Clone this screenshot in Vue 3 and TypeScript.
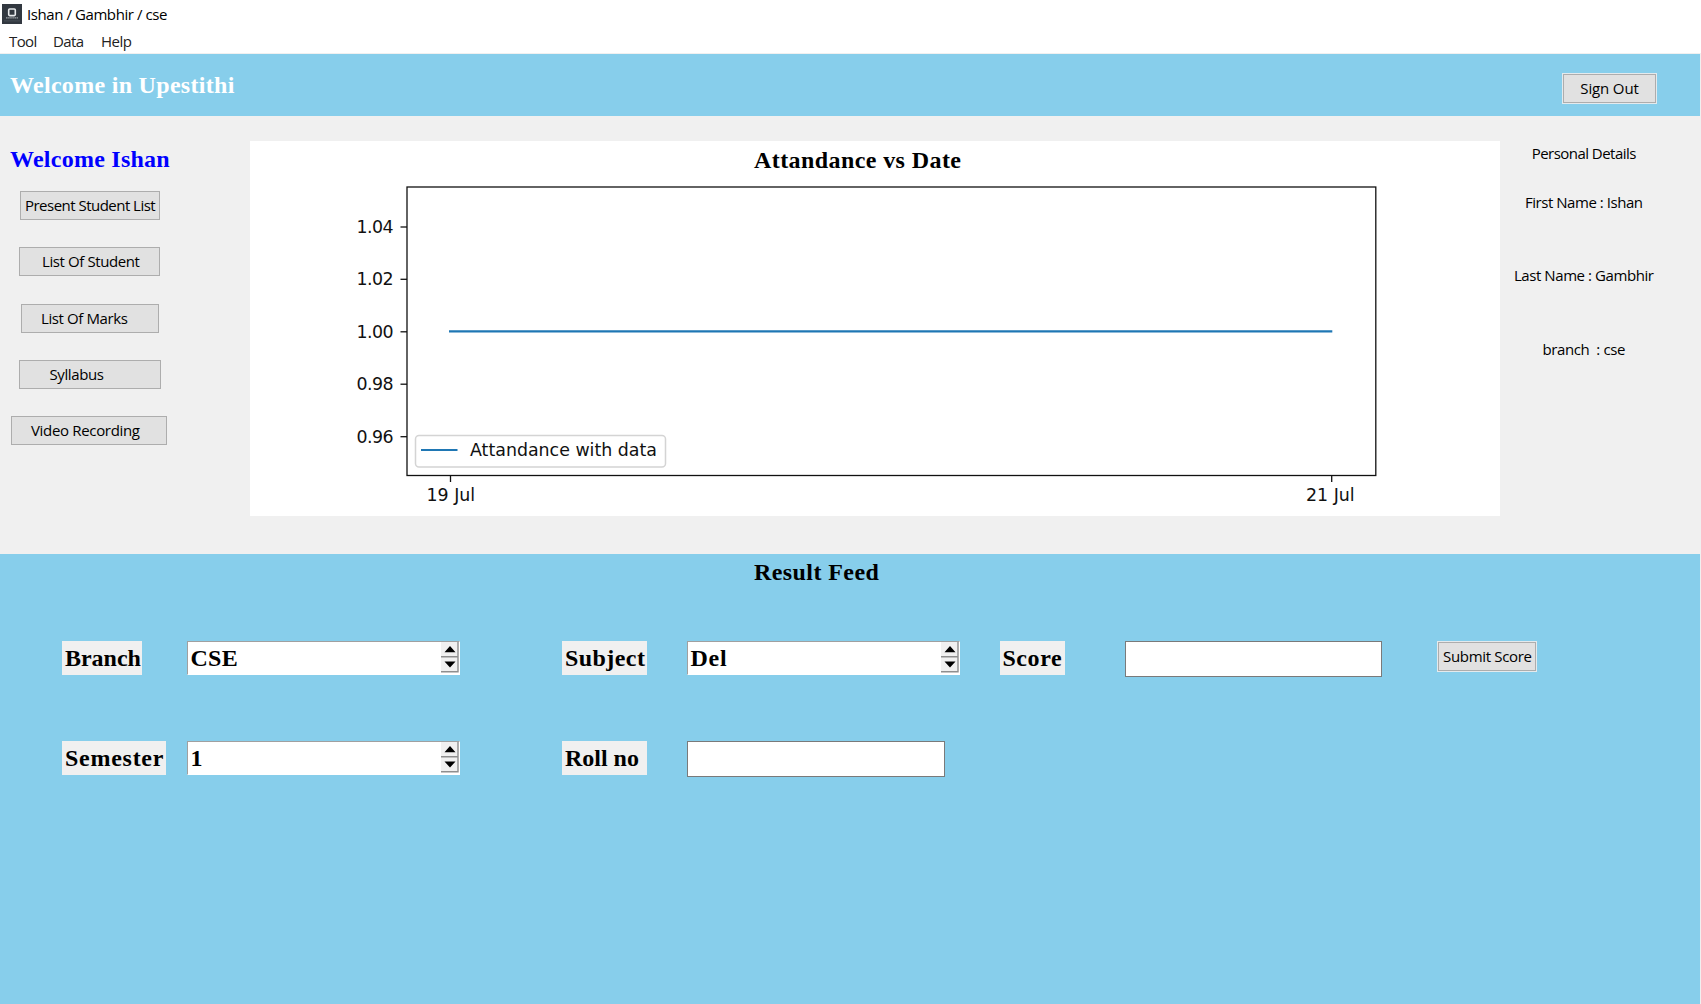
<script setup lang="ts">
interface Caption { text: string; track: number }
interface NavButton extends Caption { left: number; width: number; indent: number }

const menu: Caption[] = [
  { text: 'Tool', track: -0.6 },
  { text: 'Data', track: -0.6 },
  { text: 'Help', track: -0.5 },
]

const nav: NavButton[] = [
  { text: 'Present Student List', track: -0.52, left: 20, width: 140, indent: 4 },
  { text: 'List Of Student', track: -0.4, left: 19, width: 141, indent: 22 },
  { text: 'List Of Marks', track: -0.4, left: 21, width: 138, indent: 19 },
  { text: 'Syllabus', track: -0.4, left: 19, width: 142, indent: 29.5 },
  { text: 'Video Recording', track: -0.33, left: 11, width: 156, indent: 19 },
]

const details: Caption[] = [
  { text: 'Personal Details', track: -0.53 },
  { text: 'First Name : Ishan', track: -0.46 },
  { text: 'Last Name : Gambhir', track: -0.42 },
  { text: 'branch  : cse', track: -0.4 },
]

const yTicks = [
  { label: '1.04', y: 86 },
  { label: '1.02', y: 138.3 },
  { label: '1.00', y: 190.8 },
  { label: '0.98', y: 243.2 },
  { label: '0.96', y: 295.7 },
]
const xTicks = [
  { label: '19 Jul', x: 200.5, left: 176.5 },
  { label: '21 Jul', x: 1081.7, left: 1056 },
]

const spacing = (track: number) => ({ letterSpacing: `${track}px` })
</script>

<template>
  <div class="window">
    <div class="titlebar">
      <svg class="app-icon" width="20" height="20" viewBox="0 0 20 20">
        <rect width="20" height="20" fill="#323840" />
        <rect x="6.7" y="5" width="6.6" height="6.6" rx="1" fill="none" stroke="#e8eaec" stroke-width="1.6" />
        <path d="M4 13.9H16" stroke="#b9bdc1" stroke-width="1" stroke-dasharray="1.6 .5" />
        <path d="M2 16.9H18" stroke="#565c63" stroke-width=".7" />
      </svg>
      <span class="caption" :style="spacing(-0.42)">Ishan / Gambhir / cse</span>
    </div>
    <nav class="menubar">
      <span v-for="m in menu" :key="m.text" class="menu-item" :style="spacing(m.track)">{{ m.text }}</span>
    </nav>

    <header class="banner">
      <h1 :style="spacing(0.3)">Welcome in Upestithi</h1>
      <button class="btn ringed sign-out" :style="spacing(-0.15)">Sign Out</button>
    </header>

    <main class="main">
      <aside class="side">
        <h2 class="hello" :style="spacing(0.25)">Welcome Ishan</h2>
        <div class="nav">
          <button
            v-for="b in nav" :key="b.text" class="btn"
            :style="{ ...spacing(b.track), marginLeft: b.left + 'px', width: b.width + 'px', paddingLeft: b.indent + 'px' }"
          >{{ b.text }}</button>
        </div>
      </aside>

      <section class="chart">
        <svg width="1250" height="375" viewBox="0 0 1250 375">
          <text class="chart-title" x="504" y="26.5" textLength="207">Attandance vs Date</text>
          <rect x="157" y="46" width="968.8" height="288.5" fill="none" stroke="#111" stroke-width="1.3" />
          <g v-for="t in yTicks" :key="t.label">
            <line x1="150.5" x2="157" :y1="t.y" :y2="t.y" stroke="#111" stroke-width="1.3" />
            <text class="tick" x="106.5" :y="t.y + 6" textLength="37">{{ t.label }}</text>
          </g>
          <g v-for="t in xTicks" :key="t.label">
            <line :x1="t.x" :x2="t.x" y1="334.5" y2="341" stroke="#111" stroke-width="1.3" />
            <text class="tick" :x="t.left" y="360">{{ t.label }}</text>
          </g>
          <line x1="199" x2="1082.3" y1="190.4" y2="190.4" stroke="#1f77b4" stroke-width="2.2" />
          <rect x="165.5" y="294.5" width="250" height="31.5" rx="3.5" fill="#fff" stroke="#d4d4d4" stroke-width="1.5" />
          <line x1="171" x2="207.5" y1="309" y2="309" stroke="#1f77b4" stroke-width="2.2" />
          <text class="tick" x="220" y="315" textLength="187">Attandance with data</text>
        </svg>
      </section>

      <aside class="details">
        <p v-for="d in details" :key="d.text" :style="spacing(d.track)">{{ d.text }}</p>
      </aside>
    </main>

    <section class="feed">
      <h2 class="feed-title" :style="spacing(0.42)">Result Feed</h2>
      <div class="form">
        <label class="tag branch">Branch</label>
        <div class="spin">
          <span :style="spacing(0.3)">CSE</span>
          <svg width="18" height="31" viewBox="0 0 18 31">
            <rect width="17" height="30" fill="#f0f0f0" />
            <path d="M0 14.8H17M0 29.8H17.5M17 0V30.5" stroke="#8e8e8e" stroke-width="1.4" fill="none" />
            <path d="M3.5 10.3L9 4L14.5 10.3ZM3.5 19.5H14.5L9 25.6Z" fill="#000" />
          </svg>
        </div>
        <label class="tag subject" :style="spacing(0.45)">Subject</label>
        <div class="spin">
          <span :style="spacing(0.8)">Del</span>
          <svg width="18" height="31" viewBox="0 0 18 31">
            <rect width="17" height="30" fill="#f0f0f0" />
            <path d="M0 14.8H17M0 29.8H17.5M17 0V30.5" stroke="#8e8e8e" stroke-width="1.4" fill="none" />
            <path d="M3.5 10.3L9 4L14.5 10.3ZM3.5 19.5H14.5L9 25.6Z" fill="#000" />
          </svg>
        </div>
        <label class="tag score" :style="spacing(0.6)">Score</label>
        <div class="entry"></div>
        <button class="btn ringed submit" :style="spacing(-0.32)">Submit Score</button>

        <label class="tag semester" :style="spacing(0.75)">Semester</label>
        <div class="spin">
          <span>1</span>
          <svg width="18" height="31" viewBox="0 0 18 31">
            <rect width="17" height="30" fill="#f0f0f0" />
            <path d="M0 14.8H17M0 29.8H17.5M17 0V30.5" stroke="#8e8e8e" stroke-width="1.4" fill="none" />
            <path d="M3.5 10.3L9 4L14.5 10.3ZM3.5 19.5H14.5L9 25.6Z" fill="#000" />
          </svg>
        </div>
        <label class="tag subject">Roll no</label>
        <div class="entry"></div>
      </div>
    </section>
  </div>
</template>

<style>
body { margin: 0; overflow: hidden; }
</style>

<style scoped>
.window {
  width: 1701px;
  height: 1004px;
  display: flex;
  flex-direction: column;
  background: #f0f0f0;
  color: #000;
  font: 15px "Open Sans", "Noto Sans", sans-serif;
  overflow: hidden;
}
h1, h2, p { margin: 0; }
h1, h2, .tag, .spin {
  font-family: "Liberation Serif", "Times New Roman", serif;
  font-size: 24px;
  font-weight: bold;
  white-space: pre;
}
.titlebar { height: 28px; display: flex; background: #fff; }
.app-icon { margin: 4px 0 0 2px; flex: none; }
.caption { margin-left: 5px; line-height: 29px; white-space: nowrap; }
.menubar {
  height: 25px;
  display: flex;
  gap: 18px;
  padding-left: 9px;
  background: #fff;
  border-bottom: 1px solid #f0f0f0;
  color: #222;
}
.menu-item { width: 26px; line-height: 26px; white-space: nowrap; }
.menu-item:nth-child(2) { width: 30px; }
.banner {
  height: 62px;
  margin-right: 1px;
  display: flex;
  justify-content: space-between;
  background: #87ceeb;
}
h1 { margin-left: 10px; line-height: 62px; color: #fff; }
.btn {
  display: block;
  box-sizing: border-box;
  height: 29px;
  margin: 0;
  padding: 0;
  border: 1px solid #adadad;
  border-radius: 0;
  background: #e1e1e1;
  color: #000;
  font: 15px/27px "Open Sans", "Noto Sans", sans-serif;
  text-align: left;
  white-space: nowrap;
}
.ringed { box-shadow: 0 0 0 1px #e4eaed; text-align: center; }
.sign-out { width: 93px; margin: 20px 44px 0 0; }
.main {
  height: 437.5px;
  display: grid;
  grid-template-columns: 250px 1250px 1fr;
}
.side { padding-top: 25px; }
.hello { margin-left: 10px; line-height: 36px; color: #00f; }
.nav { margin-top: 14px; display: flex; flex-direction: column; gap: 27.25px; }
.chart { margin-top: 25px; height: 375px; background: #fff; }
.chart svg { display: block; }
.chart-title { font: bold 24px "Liberation Serif", "Times New Roman", serif; }
.tick { font: 17.4px "DejaVu Sans", sans-serif; fill: #111; }
.details { padding-top: 26px; width: 167.5px; text-align: center; }
.details p { line-height: 22px; white-space: pre; }
.details p:nth-child(2) { margin-top: 26.5px; }
.details p:nth-child(n + 3) { margin-top: 51.6px; }
.feed { flex: 1; margin-right: 1px; background: #87ceeb; }
.feed-title { margin-left: 754px; line-height: 36px; }
.form {
  margin-top: 51.5px;
  padding-left: 62.4px;
  display: grid;
  grid-template-columns: 125px 375px 125px 312.5px 125px 312.5px 1fr;
  grid-template-rows: 100px 100px;
  align-items: start;
  justify-items: start;
}
.tag { box-sizing: border-box; height: 34px; padding-left: 2.5px; line-height: 34px; background: #f0f0f0; }
.branch { width: 80px; }
.subject { width: 85px; }
.score { width: 65px; }
.semester { width: 104px; grid-column: 1; }
.spin {
  box-sizing: border-box;
  width: 273px;
  height: 34px;
  display: flex;
  justify-content: space-between;
  padding: 0 0 0 2px;
  border: 1px solid #fff;
  border-top-color: #a0a0a0;
  border-left-color: #a0a0a0;
  background: #fff;
  line-height: 32px;
}
.entry { box-sizing: border-box; width: 257.5px; height: 36px; border: 1px solid #7a7a7a; background: #fff; }
.submit { width: 98px; margin: 1px 0 0 1px; }
</style>
